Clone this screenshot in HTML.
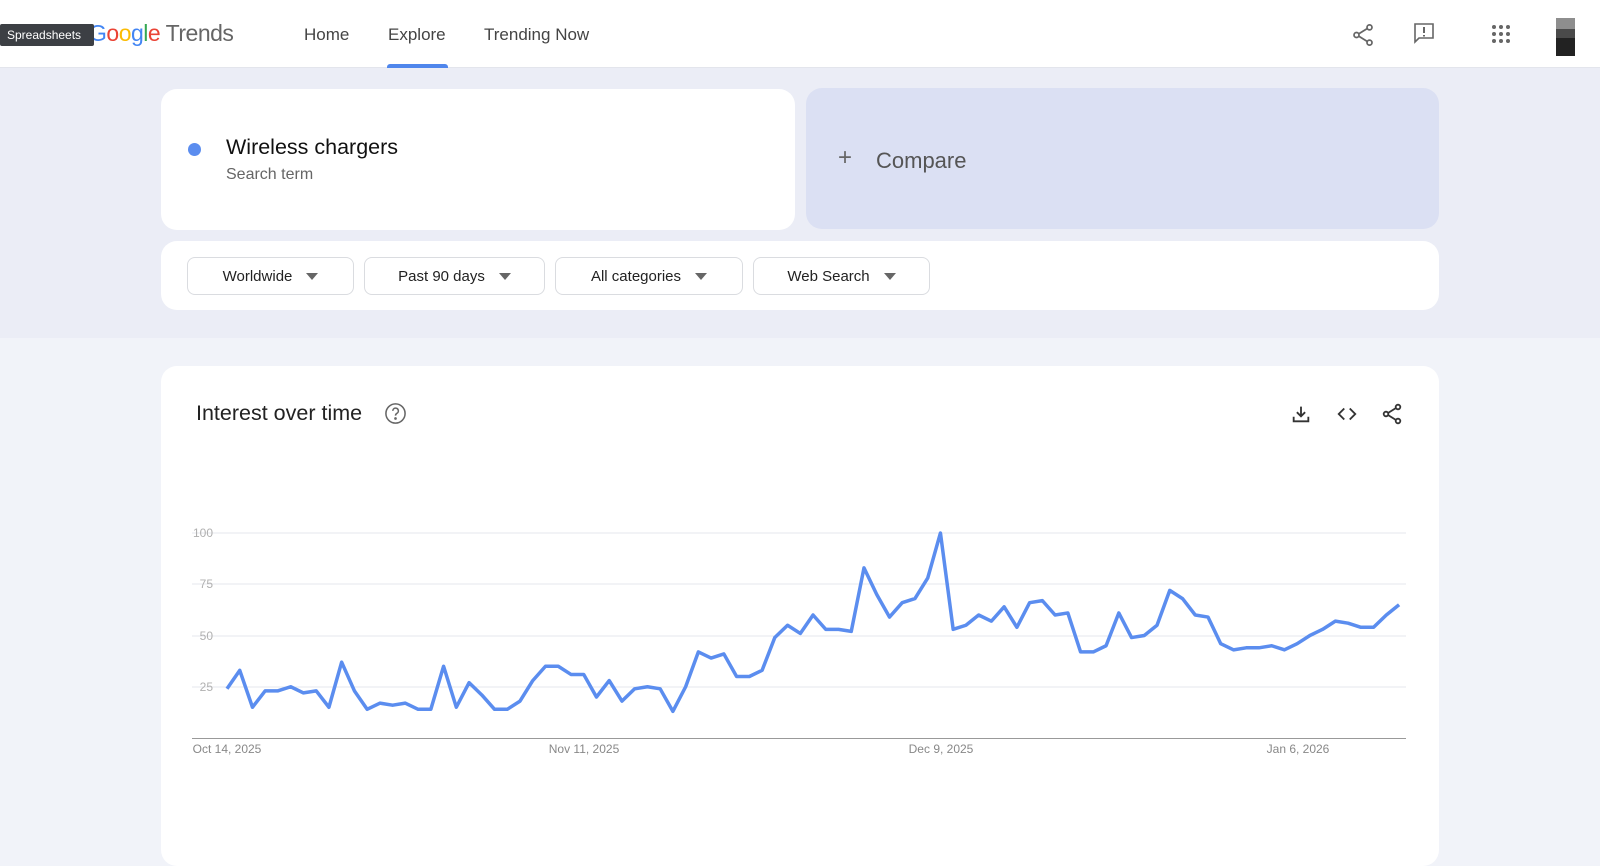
<!DOCTYPE html>
<html><head><meta charset="utf-8"><style>
*{margin:0;padding:0;box-sizing:border-box}
body{width:1600px;height:822px;overflow:hidden;background:#f1f3f9;font-family:"Liberation Sans",Arial,sans-serif;position:relative}
.abs{position:absolute}
#hdr{left:0;top:0;width:1600px;height:68px;background:#fff;border-bottom:1px solid #e3e5ec}
#band{left:0;top:68px;width:1600px;height:270px;background:#ebedf6}
.nav{top:25px;font-size:17px;color:#444}
.card{background:#fff;border-radius:16px}
.btn{top:257px;height:38px;border:1px solid #dadce0;border-radius:8px;background:#fff;font-size:15px;color:#222;display:flex;align-items:center;justify-content:center}
.tri{display:inline-block;width:0;height:0;border-left:6px solid transparent;border-right:6px solid transparent;border-top:7px solid #666;margin-left:14px}
.yl{font-size:12px;color:#b0b0b0;width:30px;text-align:right;left:183px}
.xl{font-size:12px;color:#888;top:742px;width:120px;text-align:center}
</style></head><body>
<div id="hdr" class="abs"></div>
<div id="band" class="abs"></div>

<div class="abs" style="left:89px;top:20px;font-size:23px;letter-spacing:-0.5px"><span style="color:#4285f4">G</span><span style="color:#ea4335">o</span><span style="color:#fbbc05">o</span><span style="color:#4285f4">g</span><span style="color:#34a853">l</span><span style="color:#ea4335">e</span><span style="color:#666"> Trends</span></div>
<div class="abs" style="left:0;top:24px;width:94px;height:22px;background:#3c3f44;color:#fff;font-size:12px;line-height:22px;padding-left:7px;border-radius:2px">Spreadsheets</div>

<div class="abs nav" style="left:304px">Home</div>
<div class="abs nav" style="left:388px">Explore</div>
<div class="abs nav" style="left:484px">Trending Now</div>
<div class="abs" style="left:387px;top:64px;width:61px;height:4px;background:#4f86ec;border-radius:3px 3px 0 0"></div>

<svg class="abs" style="left:1350px;top:22px" width="26" height="26" viewBox="0 0 24 24" fill="none" stroke="#666" stroke-width="1.6"><circle cx="18" cy="5" r="2.3"/><circle cx="6" cy="12" r="2.3"/><circle cx="18" cy="19" r="2.3"/><path d="M8 11 16 6M8 13 16 18"/></svg>
<svg class="abs" style="left:1412px;top:21px" width="24" height="24" viewBox="0 0 24 24" fill="none" stroke="#666" stroke-width="1.6"><path d="M3 3h18v14H7l-4 4z"/><path d="M12 6v6M12 14v1.5" stroke-width="2"/></svg>
<svg class="abs" style="left:1491px;top:24px" width="20" height="20" viewBox="0 0 20 20" fill="#666"><circle cx="3" cy="3" r="2"/><circle cx="10" cy="3" r="2"/><circle cx="17" cy="3" r="2"/><circle cx="3" cy="10" r="2"/><circle cx="10" cy="10" r="2"/><circle cx="17" cy="10" r="2"/><circle cx="3" cy="17" r="2"/><circle cx="10" cy="17" r="2"/><circle cx="17" cy="17" r="2"/></svg>
<div class="abs" style="left:1556px;top:18px;width:19px;height:38px;background:#222"><div style="height:11px;background:#8e8e8e"></div><div style="height:9px;background:#4a4a4a"></div></div>

<div class="abs card" style="left:161px;top:89px;width:634px;height:141px"></div>
<div class="abs" style="left:188px;top:143px;width:13px;height:13px;border-radius:50%;background:#5b8def"></div>
<div class="abs" style="left:226px;top:135px;font-size:21.5px;color:#111">Wireless chargers</div>
<div class="abs" style="left:226px;top:166px;font-size:16px;color:#666">Search term</div>

<div class="abs" style="left:806px;top:88px;width:633px;height:141px;background:#dbe0f3;border-radius:16px"></div>
<div class="abs" style="left:838px;top:144px;font-size:24px;color:#666;font-weight:300">+</div>
<div class="abs" style="left:876px;top:148px;font-size:22px;color:#555">Compare</div>

<div class="abs card" style="left:161px;top:241px;width:1278px;height:69px"></div>
<div class="abs btn" style="left:187px;width:167px">Worldwide<span class="tri"></span></div>
<div class="abs btn" style="left:364px;width:181px">Past 90 days<span class="tri"></span></div>
<div class="abs btn" style="left:555px;width:188px">All categories<span class="tri"></span></div>
<div class="abs btn" style="left:753px;width:177px">Web Search<span class="tri"></span></div>

<div class="abs card" style="left:161px;top:366px;width:1278px;height:500px"></div>
<div class="abs" style="left:196px;top:401px;font-size:21.5px;color:#222">Interest over time</div>
<svg class="abs" style="left:384px;top:402px" width="23" height="23" viewBox="0 0 24 24" fill="none" stroke="#666" stroke-width="1.6"><circle cx="12" cy="12" r="10"/><path d="M9.2 9.3a2.9 2.9 0 1 1 4.3 2.5c-1 .6-1.5 1.1-1.5 2.4"/><circle cx="12" cy="17.2" r=".6" fill="#666"/></svg>

<svg class="abs" style="left:1290px;top:403px" width="22" height="22" viewBox="0 0 24 24" fill="none" stroke="#333" stroke-width="2"><path d="M12 4v10M7.5 10 12 14.5 16.5 10M4 15v5h16v-5"/></svg>
<svg class="abs" style="left:1336px;top:403px" width="22" height="22" viewBox="0 0 24 24" fill="none" stroke="#333" stroke-width="2"><path d="M9 6 3 12l6 6M15 6l6 6-6 6"/></svg>
<svg class="abs" style="left:1380px;top:402px" width="24" height="24" viewBox="0 0 24 24" fill="none" stroke="#333" stroke-width="1.8"><circle cx="18" cy="5" r="2.3"/><circle cx="6" cy="12" r="2.3"/><circle cx="18" cy="19" r="2.3"/><path d="M8 11 16 6M8 13 16 18"/></svg>

<svg class="abs" style="left:0;top:0" width="1600" height="822">
<g stroke="#e6e7ec" stroke-width="1">
<line x1="192" y1="533" x2="1406" y2="533"/><line x1="192" y1="584" x2="1406" y2="584"/><line x1="192" y1="636" x2="1406" y2="636"/><line x1="192" y1="687" x2="1406" y2="687"/>
</g>
<line x1="192" y1="738.5" x2="1406" y2="738.5" stroke="#999" stroke-width="1"/>
<g transform="translate(227,738) scale(12.74,-2.05)">
<polyline fill="none" stroke="#5b8def" stroke-width="3.5" stroke-linejoin="round" vector-effect="non-scaling-stroke" points="0,24 1,33 2,15 3,23 4,23 5,25 6,22 7,23 8,15 9,37 10,23 11,14 12,17 13,16 14,17 15,14 16,14 17,35 18,15 19,27 20,21 21,14 22,14 23,18 24,28 25,35 26,35 27,31 28,31 29,20 30,28 31,18 32,24 33,25 34,24 35,13 36,25 37,42 38,39 39,41 40,30 41,30 42,33 43,49 44,55 45,51 46,60 47,53 48,53 49,52 50,83 51,70 52,59 53,66 54,68 55,78 56,100 57,53 58,55 59,60 60,57 61,64 62,54 63,66 64,67 65,60 66,61 67,42 68,42 69,45 70,61 71,49 72,50 73,55 74,72 75,68 76,60 77,59 78,46 79,43 80,44 81,44 82,45 83,43 84,46 85,50 86,53 87,57 88,56 89,54 90,54 91,60 92,65"/>
</g>
</svg>
<div class="abs yl" style="top:526px">100</div>
<div class="abs yl" style="top:577px">75</div>
<div class="abs yl" style="top:629px">50</div>
<div class="abs yl" style="top:680px">25</div>
<div class="abs xl" style="left:167px">Oct 14, 2025</div>
<div class="abs xl" style="left:524px">Nov 11, 2025</div>
<div class="abs xl" style="left:881px">Dec 9, 2025</div>
<div class="abs xl" style="left:1238px">Jan 6, 2026</div>
</body></html>
